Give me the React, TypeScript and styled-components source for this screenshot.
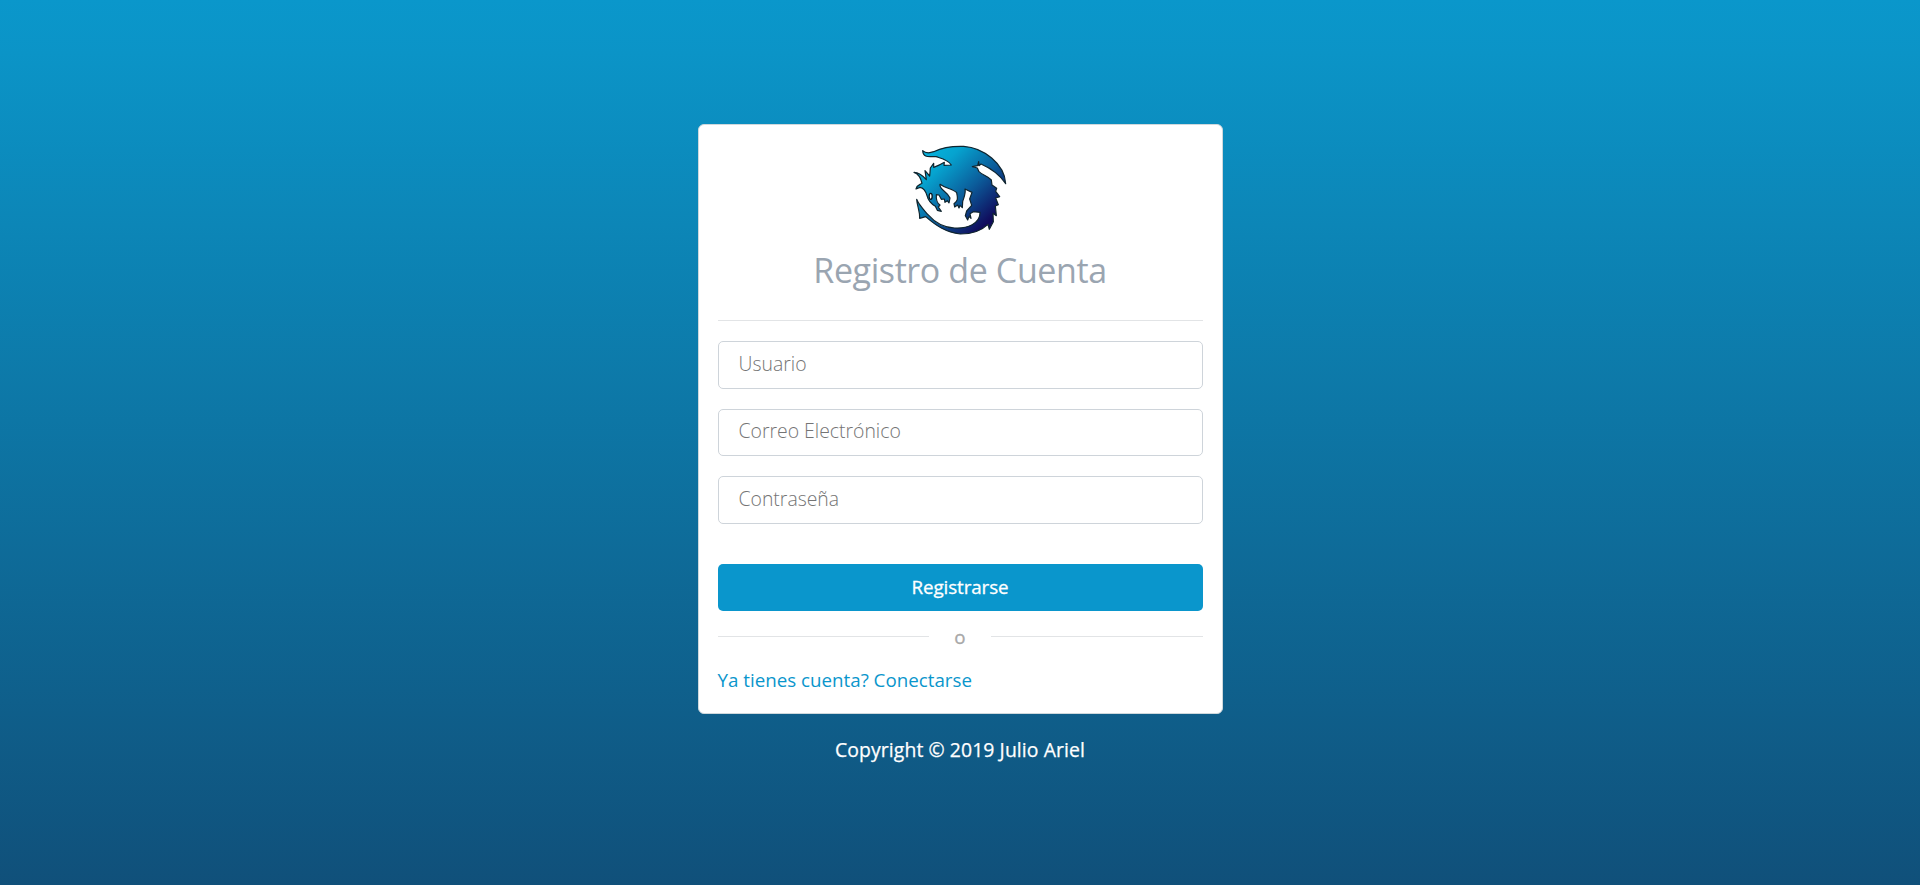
import React from 'react';
import styled, { createGlobalStyle } from 'styled-components';

const GlobalStyle = createGlobalStyle`
  *, *::before, *::after { box-sizing: border-box; }
  html, body { margin: 0; }
  body {
    font-family: 'Segoe UI', 'Open Sans', 'Noto Sans', sans-serif;
    font-size: 18.75px;
    line-height: 27px;
    color: #9aa5b1;
  }
`;

const Page = styled.div`
  height: 100vh;
  min-height: 885px;
  padding-top: 124px;
  display: flex;
  flex-direction: column;
  align-items: center;
  background: linear-gradient(180deg, #0a97cb 0%, #0b94c7 6%, #10507a 100%);
`;

const Card = styled.main`
  width: 525px;
  height: 590px;
  padding: 18px 19px;
  display: flex;
  flex-direction: column;
  background: #fff;
  border: 1px solid #cfd8dc;
  border-radius: 6px;
`;

const Logo = styled.svg`
  display: block;
  width: 100px;
  height: 94px;
  margin: 0 auto;
`;

const Title = styled.h1`
  margin: 9px 0 0;
  font-size: 34px;
  line-height: 48px;
  font-weight: 400;
  letter-spacing: -0.4px;
  text-align: center;
  color: #9aa5b1;
  white-space: nowrap;
`;

const Rule = styled.hr`
  width: 100%;
  height: 1px;
  margin: 26px 0 20px;
  border: 0;
  background: #e2e4e6;
`;

const Form = styled.form`
  display: flex;
  flex-direction: column;
  gap: 20px;
`;

const Field = styled.input`
  width: 100%;
  height: 47.5px;
  padding: 5px 20px 8px;
  border: 1px solid #ced4da;
  border-radius: 5px;
  font-family: inherit;
  font-size: 19.4px;
  font-weight: 300;
  color: #495057;
  outline: none;
  &::placeholder { color: #747474; opacity: 1; }
`;

const Submit = styled.button`
  height: 47px;
  margin-top: 20px;
  border: 0;
  border-radius: 5px;
  background: #0a96cc;
  color: #fff;
  font-family: inherit;
  font-size: 18.8px;
  font-weight: 500;
  letter-spacing: -0.1px;
  line-height: 27px;
  -webkit-text-stroke: 0.3px #fff;
`;

const Divider = styled.div`
  display: flex;
  align-items: center;
  justify-content: space-between;
  height: 27px;
  margin-top: 12px;
  color: #a8a8a8;
  &::before, &::after {
    content: '';
    width: 211.5px;
    height: 1px;
    background: #e2e4e6;
  }
`;

const Or = styled.span`
  padding-top: 1px;
  -webkit-text-stroke: 0.3px #a8a8a8;
`;

const SignIn = styled.a`
  align-self: flex-start;
  margin-top: 16px;
  color: #0a96cc;
  text-decoration: none;
  white-space: nowrap;
`;

const Footer = styled.footer`
  margin-top: 22px;
  color: #fff;
  font-size: 19.4px;
  font-weight: 500;
  letter-spacing: 0.08px;
  -webkit-text-stroke: 0.25px #fff;
  white-space: nowrap;
`;

const DragonLogo = () => (
  <Logo viewBox="30 24 300 282" aria-hidden="true">
    <defs>
      <linearGradient id="scales" gradientUnits="userSpaceOnUse" x1="80" y1="60" x2="268" y2="256">
        <stop offset="0" stopColor="#06afd9" />
        <stop offset="0.2" stopColor="#06a3cf" />
        <stop offset="0.6" stopColor="#0b5d9b" />
        <stop offset="1" stopColor="#100b5c" />
      </linearGradient>
    </defs>
    <path
      d="M68 47 Q80 58 101 50 C130 36 160 33 191 34 C250 38 314 86 317 146
        C300 120 270 99 243 87 L237 92 L236 80 L233 92 L217 95 L232 99 L237 110
        C248 121 262 121 274 135 L276 150 L290 160 L287 169 L299 185 L287 189
        L295 209 L286 213 L289 242 L279 235 L280 260 L268 283 L264 268
        C240 291 212 297 181 297 C137 292 108 272 77 245 L59 250
        C60 228 52 216 50 193 C57 211 72 225 84 239 C104 262 128 278 164 279
        C202 281 241 266 240 232 L220 230 L210 236 L213 250 L207 244 L203 255
        L196 242 L200 228 L215 211 L209 192 L216 172 L195 162
        C198 176 191 189 188 200 L187 218 L180 211 L177 219 L173 210 L164 216
        L162 206 C177 194 172 187 170 173 C158 161 137 161 120 148
        C117 164 141 168 150 189 L147 204 L142 197 L135 202 L133 192 L124 193
        L117 180 L109 179 C108 193 109 204 120 210 L115 216 L124 229 L112 226
        L106 214 C89 204 84 194 81 182 C77 168 68 158 60 157 L48 162
        C51 149 58 150 66 145 C62 128 54 116 42 112 Q60 112 79 134
        L75 107 L89 123 L91 99 L101 85 L101 97 Q119 91 133 82 L132 91 L154 90
        C143 73 123 70 108 65 C91 63 70 72 68 47 Z"
      fill="url(#scales)"
      stroke="#10252f"
      strokeWidth="3.6"
      strokeLinejoin="round"
    />
    <ellipse cx="92" cy="184" rx="4.5" ry="9" fill="#fff" stroke="#08131c" strokeWidth="4" />
  </Logo>
);

export default function App() {
  return (
    <>
      <GlobalStyle />
      <Page>
        <Card>
          <DragonLogo />
          <Title>Registro de Cuenta</Title>
          <Rule />
          <Form onSubmit={(e) => e.preventDefault()}>
            <Field type="text" placeholder="Usuario" />
            <Field type="email" placeholder="Correo Electrónico" />
            <Field type="password" placeholder="Contraseña" />
            <Submit type="submit">Registrarse</Submit>
          </Form>
          <Divider><Or>o</Or></Divider>
          <SignIn href="#">Ya tienes cuenta? Conectarse</SignIn>
        </Card>
        <Footer>Copyright © 2019 Julio Ariel</Footer>
      </Page>
    </>
  );
}
